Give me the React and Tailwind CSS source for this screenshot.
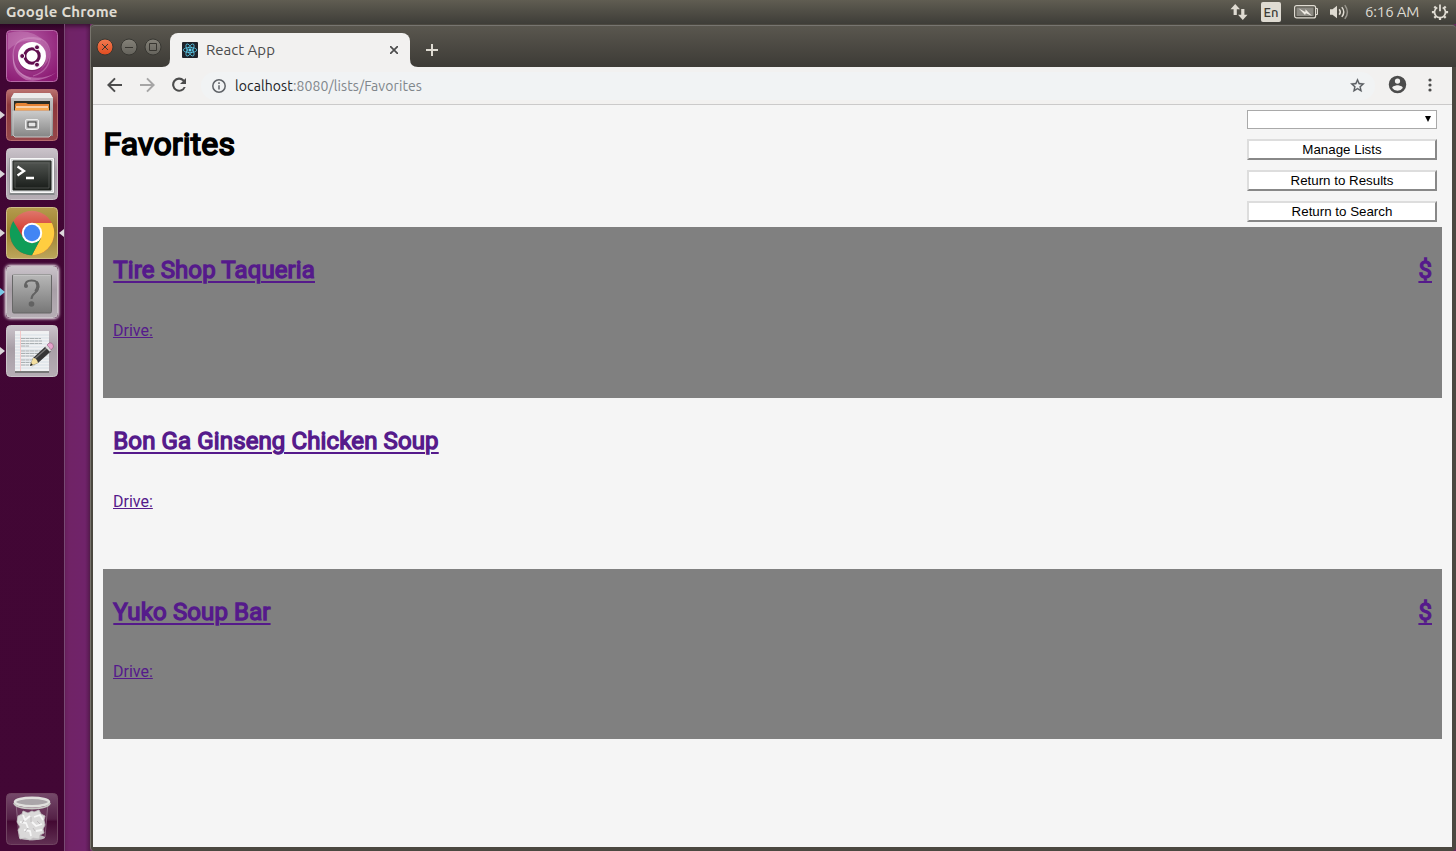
import React from "react";

const restaurants = [
  { name: "Tire Shop Taqueria", price: "$", card: "h-[171px] bg-[#808080]", gap: "mt-[37px]" },
  { name: "Bon Ga Ginseng Chicken Soup", price: "", card: "h-[171px]", gap: "mt-[37px]" },
  { name: "Yuko Soup Bar", price: "$", card: "h-[170px] bg-[#808080]", gap: "mt-9" },
];

const uiFont = "font-['Ubuntu','Noto_Sans',sans-serif]";

function StatusIcons() {
  return (
    <div className="flex h-6 items-center text-[#dfdbd2]">
      <svg className="mr-[13px] h-[18px] w-[18px]" viewBox="0 0 18 18" fill="currentColor">
        <path d="M5.2 1 10 6.2H6.8V12H3.6V6.2H.5zM12.8 17 8 11.8h3.2V6h3.2v5.8h3.1z" />
      </svg>
      <div className="mr-[13px] flex h-5 w-5 items-center justify-center rounded-[2px] bg-[#dfdbd2] text-[13px] leading-none font-medium text-[#3c3b37]">En</div>
      <svg className="mr-[11px] h-[14px] w-[25px]" viewBox="0 0 25 14">
        <rect x=".6" y=".6" width="21" height="12.3" rx="2" fill="none" stroke="#dfdbd2" strokeWidth="1.2" />
        <rect x="2.5" y="2.5" width="17" height="8.5" fill="#8b8982" />
        <path d="M22 3.5h1.5v6H22" fill="none" stroke="#dfdbd2" />
        <path d="M4.5 3.2 11.3 7l.2-2.7L18 11l-6-2.8-1 1.8z" fill="#eeeae2" />
      </svg>
      <svg className="mr-[15px] h-4 w-5" viewBox="0 0 20 16" fill="none" strokeWidth="1.5">
        <path d="M0 5.2h2.5L7 1.8v12.4l-4.5-3.4H0z" fill="#dfdbd2" />
        <path d="M9.2 5.2q2.2 2.8 0 5.6M11.8 3.1q4 4.9 0 9.8" stroke="#dfdbd2" />
        <path d="M14.8 1.1q5.2 6.9 0 13.8" stroke="#99968e" />
      </svg>
      <span className="w-[54px] whitespace-nowrap text-[15px] leading-6 tracking-[-0.15px]">6:16 AM</span>
      <svg className="ml-3 mr-[7px] h-[18px] w-[18px]" viewBox="0 0 18 18" fill="none" stroke="#dfdbd2">
        <path d="M6.3 4.4a5.5 5.5 0 1 0 5.4 0" strokeWidth="1.7" />
        <path d="M9 1.5v6.8" strokeWidth="1.8" />
        <path d="M9 14.8v2.3M14.8 9.2h2.3M3.2 9.2H.9M13 13.2l1.7 1.7M5 13.2l-1.7 1.7M13 5.2l1.7-1.7M5 5.2 3.3 3.5" strokeWidth="2.2" />
      </svg>
    </div>
  );
}

function DashIcon() {
  return (
    <svg className="h-[52px] w-[52px]" viewBox="0 0 52 52">
      <defs>
        <radialGradient id="dash" cx=".4" cy=".3" r=".8"><stop stopColor="#b75ba5" /><stop offset=".55" stopColor="#9d3889" /><stop offset="1" stopColor="#8b1872" /></radialGradient>
      </defs>
      <rect x=".5" y=".5" width="51" height="51" rx="4" fill="url(#dash)" stroke="#b66aa7" />
      <path d="M2 3Q26-3 40 13 49 27 35 39 42 20 27 12 15 8 2 20z" fill="#e0b0d8" opacity=".3" />
      <path d="M8 21Q5 42 24 47q14 3 27-5Q36 53 20 50 3 42 8 21z" fill="#e0b0d8" opacity=".45" />
      <path d="M17 9q24-6 27 13 1 19-17 24M35 10Q8 3 7 25q0 18 18 24" fill="none" stroke="#dda8d3" strokeWidth="1.2" opacity=".4" />
      <circle cx="26" cy="27.3" r="14" fill="#751a61" opacity=".6" />
      <circle cx="26" cy="26" r="14" fill="#fff" />
      <circle cx="26" cy="26" r="7.2" fill="none" stroke="#610f4f" strokeWidth="3.1" />
      <g fill="#610f4f" stroke="#fff" strokeWidth="1"><circle cx="16.2" cy="26" r="2.5" /><circle cx="31" cy="17.3" r="2.5" /><circle cx="31" cy="34.7" r="2.5" /></g>
    </svg>
  );
}

function FilesIcon() {
  return (
    <svg className="h-[52px] w-[52px]" viewBox="0 0 52 52">
      <defs><linearGradient id="metal" x2="0" y2="1"><stop stopColor="#cbcbcb" /><stop offset="1" stopColor="#858585" /></linearGradient><linearGradient id="red" x2="0" y2="1"><stop stopColor="#bb7471" /><stop offset=".3" stopColor="#8d373b" /><stop offset="1" stopColor="#95474a" /></linearGradient></defs>
      <rect x=".5" y=".5" width="51" height="51" rx="4" fill="url(#red)" stroke="#b66d70" />
      <path d="M8 4h36l3 5v38H5V9z" fill="url(#metal)" /><path d="M8 4h36l3 5H5z" fill="#ececec" />
      <path d="M8 12h36v10H8z" fill="#292c25" /><path d="M9 16q0-2 2-2h9l2 1h21v7H9z" fill="#e58435" />
      <path d="M10 18h32" stroke="#fff1de" strokeWidth="1.4" /><path d="M9 20h34" stroke="#f7a850" strokeWidth="2" />
      <path d="M7 22h38v24l-2 2H9l-2-2z" fill="url(#metal)" stroke="#c8c8c8" />
      <rect x="19.5" y="30.5" width="13" height="10" rx="1.5" fill="#c2c2c2" stroke="#ececec" /><rect x="22" y="33" width="8" height="5" fill="#e4e4e4" stroke="#333" />
    </svg>
  );
}

function GreyTile({ children }) {
  return (
    <svg className="h-[52px] w-[52px]" viewBox="0 0 52 52">
      <defs><linearGradient id="tile" x2="0" y2="1"><stop stopColor="#cbc4cb" /><stop offset=".45" stopColor="#a89fa7" /><stop offset="1" stopColor="#b6aeb5" /></linearGradient></defs>
      <rect x=".5" y=".5" width="51" height="51" rx="4" fill="url(#tile)" stroke="#cbc5ca" />
      {children}
    </svg>
  );
}

function TerminalIcon() {
  return (
    <GreyTile>
      <defs><linearGradient id="screen" x2="0" y2="1"><stop stopColor="#525652" /><stop offset="1" stopColor="#171b18" /></linearGradient></defs>
      <path d="M3.5 10h45v37h-45z" fill="#85888a" /><path d="M4.5 10.5h43v34h-43z" fill="#d8dadb" stroke="#f7f7f7" />
      <path d="M7 13h38v29H7z" fill="url(#screen)" stroke="#202420" /><path d="M9 15h34v25H9z" fill="none" stroke="#60635f" strokeWidth=".7" />
      <path d="m11.5 18.5 6.5 4.5-6.5 4.5M20 30h8" fill="none" stroke="#fff" strokeWidth="2.3" />
    </GreyTile>
  );
}

function BrowserIcon() {
  return (
    <svg className="h-[52px] w-[52px]" viewBox="0 0 52 52">
      <defs><linearGradient id="gold" x2="0" y2="1"><stop stopColor="#b59b4d" /><stop offset=".45" stopColor="#9c812f" /><stop offset="1" stopColor="#bda65b" /></linearGradient><linearGradient id="crown" x2="0" y2="1"><stop stopColor="#df8175" /><stop offset=".45" stopColor="#d64035" /></linearGradient><clipPath id="wheel"><circle cx="26" cy="26" r="22.2" /></clipPath></defs>
      <rect x=".5" y=".5" width="51" height="51" rx="4" fill="url(#gold)" stroke="#cebe87" />
      <g clipPath="url(#wheel)"><rect width="52" height="52" fill="url(#crown)" /><path d="M26 16h26v36H24l11-21z" fill="#ffcd40" /><path d="M6 12l11.3 19Q26 41 35 31L24 52H0V12z" fill="#0f9d58" /></g>
      <circle cx="26" cy="26" r="10.2" fill="#fff" /><circle cx="26" cy="26" r="8.2" fill="#4285f4" />
    </svg>
  );
}

function QuestionIcon() {
  return (
    <GreyTile>
      <defs><linearGradient id="plate" x2="0" y2="1"><stop stopColor="#b8b8b8" /><stop offset="1" stopColor="#777" /></linearGradient></defs>
      <rect x="6.5" y="8.5" width="39" height="38.5" rx="1.5" fill="url(#plate)" stroke="#676767" /><path d="M7 9h38" stroke="#d1d1d1" />
      <path d="M19.5 20.5Q18.5 14.5 25.5 14.5q7.5 0 7 6.5-.5 3.5-4 6.5-3 2.2-3 5.5" fill="none" stroke="#626262" strokeWidth="2" />
      <circle cx="20" cy="20" r="2" fill="#626262" /><path d="M30.5 16q3 5-1 9.5" fill="none" stroke="#626262" strokeWidth="3" /><circle cx="25.5" cy="38" r="2.8" fill="#626262" />
    </GreyTile>
  );
}

function EditorIcon() {
  return (
    <GreyTile>
      <path d="M9 47h34" stroke="#777" strokeWidth="2" /><path d="M9 6h34v40H9z" fill="#f0f1f2" />
      <path d="M9 10h34M9 13h34M9 16h34M9 19h34M9 22h34M9 25h34M9 28h34M9 31h34M9 34h34M9 37h34M9 40h34M9 43h34" stroke="#cbd7e3" strokeWidth=".7" /><path d="M14.5 6v40" stroke="#f4c8c8" />
      <path d="M15 13.5h20M15 16h21M15 18.5h21M15 21h8M15 26h21M15 28.5h17M15 31h13M15 35h12M15 37.5h11M15 40h8" stroke="#a4a9ac" strokeWidth=".9" strokeDasharray="4 .5" />
      <path d="m25 43 20-16-1-3z" fill="#777" opacity=".55" />
      <path d="m24 41 3-8 13-12 5 5-13 12z" fill="#353535" /><path d="m28.5 34 13-11.5" stroke="#777" strokeWidth="1.3" /><path d="m24 41 3-8q4 0 5 5z" fill="#f3dfa0" /><path d="m24 41 1-3 2 2z" fill="#222" /><path d="m41 20 2-2q4-1 4.5 4L45 25z" fill="#e6a2cc" stroke="#8e5a7b" strokeWidth=".6" /><path d="m39.5 21 5 5" stroke="#ddd" strokeWidth="2" />
    </GreyTile>
  );
}

function TrashIcon() {
  return (
    <svg className="h-[52px] w-[52px]" viewBox="0 0 52 52">
      <defs><linearGradient id="bin" x2="0" y2="1"><stop stopColor="#75496a" /><stop offset=".5" stopColor="#542046" /><stop offset=".55" stopColor="#430932" /><stop offset="1" stopColor="#613053" /></linearGradient></defs>
      <rect x=".5" y=".5" width="51" height="51" rx="4" fill="url(#bin)" stroke="#704461" />
      <path d="m10 10 3 34q13 6 26 0l3-34" fill="#733f63" opacity=".5" stroke="#b9a5b2" /><ellipse cx="26" cy="44.5" rx="13" ry="2.8" fill="#bcb6bb" />
      <path d="m12 23 4-2 1-3 5 2 4-2 2 1 5-2 2 4 4 2-1 4 1 5-2 4 1 4-4 2-1 4-6-1-3 2-5-2-5 1-1-5-1-4 2-3-3-5z" fill="#dad9d9" stroke="#c3c0c2" strokeWidth=".8" />
      <path d="m17 22 2 5 5-4M28 24l6-2 3 5M14 29l6 1 2 5M26 29l4 4 6-2M18 37l6 1 1 5M30 38l6-1" stroke="#f7f7f7" fill="none" strokeWidth="1.8" /><path d="m18 27-2 3m9-6v5m6-1 3 3m-12 4-3 4m8-4 2 3" fill="none" stroke="#bfbcbe" />
      <ellipse cx="26" cy="9" rx="17" ry="4.2" fill="#aaa5a9" stroke="#e0e0dd" strokeWidth="2.6" /><path d="M8 10q2 5.5 18 5.5t18-5.5" fill="none" stroke="#c7c7c3" strokeWidth="2" />
    </svg>
  );
}

function LauncherItem({ children, arrow, active }) {
  return (
    <div className="flex h-[52px] w-16 items-center">
      <div className="w-[6px]">{arrow && <svg className="h-2 w-[5px]" viewBox="0 0 5 8"><path d="m0 0 5 4-5 4z" fill={arrow} /></svg>}</div>
      {children}
      {active && <svg className="ml-[1px] h-2 w-[5px]" viewBox="0 0 5 8"><path d="m5 0-5 4 5 4z" fill="#ddd8dc" /></svg>}
    </div>
  );
}

function Launcher() {
  return (
    <aside className="flex w-[65px] flex-col border-r border-[#784a73] bg-[#410635] bg-linear-to-b from-[#2c0424] from-0% via-[#410634] via-[6px] to-[#420735] pt-[6px]">
      <div className="flex flex-col gap-[7px]">
        <LauncherItem><DashIcon /></LauncherItem>
        <LauncherItem arrow="#d9d5d8"><FilesIcon /></LauncherItem>
        <LauncherItem arrow="#d9d5d8"><TerminalIcon /></LauncherItem>
        <LauncherItem arrow="#d9d5d8" active><BrowserIcon /></LauncherItem>
        <LauncherItem arrow="#77c9e8"><div className="rounded-[4px] shadow-[0_0_3px_1px_#fff]"><QuestionIcon /></div></LauncherItem>
        <LauncherItem arrow="#d9d5d8"><EditorIcon /></LauncherItem>
      </div>
      <div className="mt-auto mb-[6px]"><LauncherItem><TrashIcon /></LauncherItem></div>
    </aside>
  );
}

function WindowButton({ kind }) {
  return (
    <svg className="h-[18px] w-[18px]" viewBox="0 0 18 18">
      <defs><linearGradient id="orange" x2="0" y2="1"><stop stopColor="#f37b51" /><stop offset="1" stopColor="#df4b1f" /></linearGradient><linearGradient id="control" x2="0" y2="1"><stop stopColor="#858279" /><stop offset="1" stopColor="#64625b" /></linearGradient></defs>
      <circle cx="9" cy="9" r="8" fill={kind === "close" ? "url(#orange)" : "url(#control)"} stroke="#383732" />
      <path d={kind === "close" ? "m6 6 6 6m0-6-6 6" : kind === "min" ? "M5 9.5h8" : "M5.5 5.5h7v7h-7z"} fill="none" stroke="#383631" />
    </svg>
  );
}

function TabStrip() {
  return (
    <div className="flex h-[42px] items-end rounded-t-[4px] border-t border-[#777570] bg-linear-to-b from-[#5a574f] to-[#3d3b36]">
      <div className="mb-[11px] ml-[5px] flex gap-[6px]"><WindowButton kind="close" /><WindowButton kind="min" /><WindowButton kind="max" /></div>
      <svg className="h-2 w-2" viewBox="0 0 8 8"><path d="M0 8q8 0 8-8v8z" fill="#f2f1f0" /></svg>
      <div className={"flex h-[34px] w-[240px] items-center rounded-t-[8px] bg-[#f2f1f0] px-3 text-[#4c4c4c] " + uiFont}>
        <svg className="mr-2 h-4 w-4" viewBox="0 0 16 16" fill="none" stroke="#61dafb" strokeWidth=".7">
          <rect width="16" height="16" rx="1" fill="#20232a" stroke="none" /><ellipse cx="8" cy="8" rx="6.8" ry="2.6" /><ellipse cx="8" cy="8" rx="6.8" ry="2.6" transform="rotate(60 8 8)" /><ellipse cx="8" cy="8" rx="6.8" ry="2.6" transform="rotate(120 8 8)" /><circle cx="8" cy="8" r="1.2" fill="#61dafb" />
        </svg>
        <span className="text-[15px] leading-5">React App</span>
        <svg className="ml-auto h-2 w-2" viewBox="0 0 8 8"><path d="m0 0 8 8m0-8L0 8" stroke="#4c4c4c" strokeWidth="1.7" /></svg>
      </div>
      <svg className="h-2 w-2" viewBox="0 0 8 8"><path d="M0 0q0 8 8 8H0z" fill="#f2f1f0" /></svg>
      <svg className="mb-[11px] ml-2 h-3 w-3" viewBox="0 0 12 12"><path d="M0 6h12M6 0v12" stroke="#dfdbd2" strokeWidth="2" /></svg>
    </div>
  );
}

function Toolbar() {
  return (
    <div className="flex h-[38px] shrink-0 items-center border-b border-[#cbcaca] bg-[#f2f1f0] pl-[14px] text-[#4c4c4c]">
      <svg className="mb-px h-4 w-4" viewBox="0 0 16 16" fill="none" stroke="#4c4c4c" strokeWidth="2"><path d="M15 8H2.5M8 1.4 1.4 8 8 14.6" /></svg>
      <svg className="mb-px ml-4 h-4 w-4" viewBox="0 0 16 16" fill="none" stroke="#a6a5a5" strokeWidth="2"><path d="M1 8h12.5M8 1.4 14.6 8 8 14.6" /></svg>
      <svg className="mb-px ml-4 h-4 w-4" viewBox="0 0 16 16" fill="#4c4c4c"><path d="M13.2 2.8A7 7 0 1 0 14.7 10h-2a5 5 0 1 1-.9-5.7L9 7h6V1z" /></svg>
      <div className={"ml-[14px] flex h-7 w-[1174px] items-center rounded-full bg-[#f1f3f4] pl-[11px] pr-[9px] text-[14px] " + uiFont}>
        <svg className="mr-[9px] h-[14px] w-[14px]" viewBox="0 0 14 14" fill="none" stroke="#5f6368"><circle cx="7" cy="7" r="6.2" strokeWidth="1.5" /><path d="M7 6.2v4.2M7 3.3v1.6" strokeWidth="1.5" /></svg>
        <div className="whitespace-nowrap leading-5 tracking-[0.1px] text-[#80868b]"><span className="text-[#202124]">localhost</span>:8080/lists/Favorites</div>
        <svg className="ml-auto h-[17px] w-[17px]" viewBox="0 0 24 24" fill="#55595e" stroke="#55595e" strokeWidth=".4"><path d="m22 9.24-7.19-.62L12 2 9.19 8.63 2 9.24l5.46 4.73L5.82 21 12 17.27 18.18 21l-1.63-7.03zM12 15.4l-3.76 2.27 1-4.28-3.32-2.88 4.38-.38L12 6.1l1.71 4.04 4.38.38-3.32 2.88 1 4.28z" /></svg>
      </div>
      <svg className="mb-[2px] ml-[12px] h-[21px] w-[21px]" viewBox="0 0 24 24" fill="#4c4c4c"><path d="M12 2a10 10 0 1 0 0 20 10 10 0 0 0 0-20m0 3a3 3 0 1 1 0 6 3 3 0 0 1 0-6m0 14.2a7.2 7.2 0 0 1-6-3.22c.03-1.99 4-3.08 6-3.08s5.97 1.09 6 3.08a7.2 7.2 0 0 1-6 3.22" /></svg>
      <svg className="mb-px ml-[20px] h-[14px] w-1" viewBox="0 0 4 14" fill="#4c4c4c"><circle cx="2" cy="2" r="1.6" /><circle cx="2" cy="7" r="1.6" /><circle cx="2" cy="12" r="1.6" /></svg>
    </div>
  );
}

function ActionButton({ children }) {
  return <button className="h-[21px] border-2 border-t-[#dddddd] border-l-[#dddddd] border-r-[#888888] border-b-[#888888] bg-white text-center font-['Liberation_Sans',sans-serif] text-[13.333px] leading-[17px] text-black">{children}</button>;
}

function FavoritesPage() {
  return (
    <main className="flex-1 bg-[#f5f5f5] px-[10px] font-['Roboto',sans-serif]">
      <header className="flex h-[122px] justify-between pr-[5px] pt-[5px]">
        <h1 className="pt-[15px] pl-[0.5px] text-[32px] leading-[38px] font-normal tracking-[0.13px] text-black [-webkit-text-stroke:1.7px_black]">Favorites</h1>
        <div className="flex w-[190px] flex-col gap-[10px]">
          <div className="flex h-[19px] items-center justify-end border border-[#a9a9a9] bg-white pr-[5px]">
            <svg className="mb-[1px] h-[6px] w-[6px]" viewBox="0 0 6 6"><path d="M0 0h6L3 6z" /></svg>
          </div>
          <ActionButton>Manage Lists</ActionButton>
          <ActionButton>Return to Results</ActionButton>
          <ActionButton>Return to Search</ActionButton>
        </div>
      </header>
      {restaurants.map((place) => (
        <section key={place.name} className={"px-[10px] pt-[29px] text-[#551a8b] " + place.card}>
          <div className="flex justify-between text-[24px] leading-[28px] tracking-[0.12px] [-webkit-text-stroke:1.35px_#551a8b]">
            <h2 className="pl-[0.3px] underline decoration-2 underline-offset-[3px]">{place.name}</h2>
            <span className="underline decoration-2 underline-offset-[3px]">{place.price}</span>
          </div>
          <p className={"text-[16px] leading-[19px] underline " + place.gap}>Drive:</p>
        </section>
      ))}
    </main>
  );
}

export default function App() {
  return (
    <div className="flex h-[851px] w-[1456px] flex-col overflow-hidden bg-[#6d2266]">
      <div className={"flex h-6 shrink-0 items-center justify-between bg-linear-to-b from-[#605d52] to-[#3e3d38] pl-[6px] " + uiFont}>
        <span className="text-[15px] leading-6 font-bold tracking-[0.2px] text-[#dfdbd2]">Google Chrome</span>
        <StatusIcons />
      </div>
      <div className="flex min-h-0 flex-1">
        <Launcher />
        <div className="w-[25px] bg-linear-to-r from-[#702365] via-[#70236a] via-80% to-[#5b1d53] shadow-[inset_0_4px_5px_-2px_#35102e]" />
        <div className="flex flex-1 flex-col rounded-[4px] border-l border-[#77746c] bg-[#4b4840] pt-px">
          <TabStrip />
          <div className="mr-1 mb-1 ml-[2px] flex flex-1 flex-col">
            <Toolbar />
            <FavoritesPage />
          </div>
        </div>
      </div>
    </div>
  );
}
